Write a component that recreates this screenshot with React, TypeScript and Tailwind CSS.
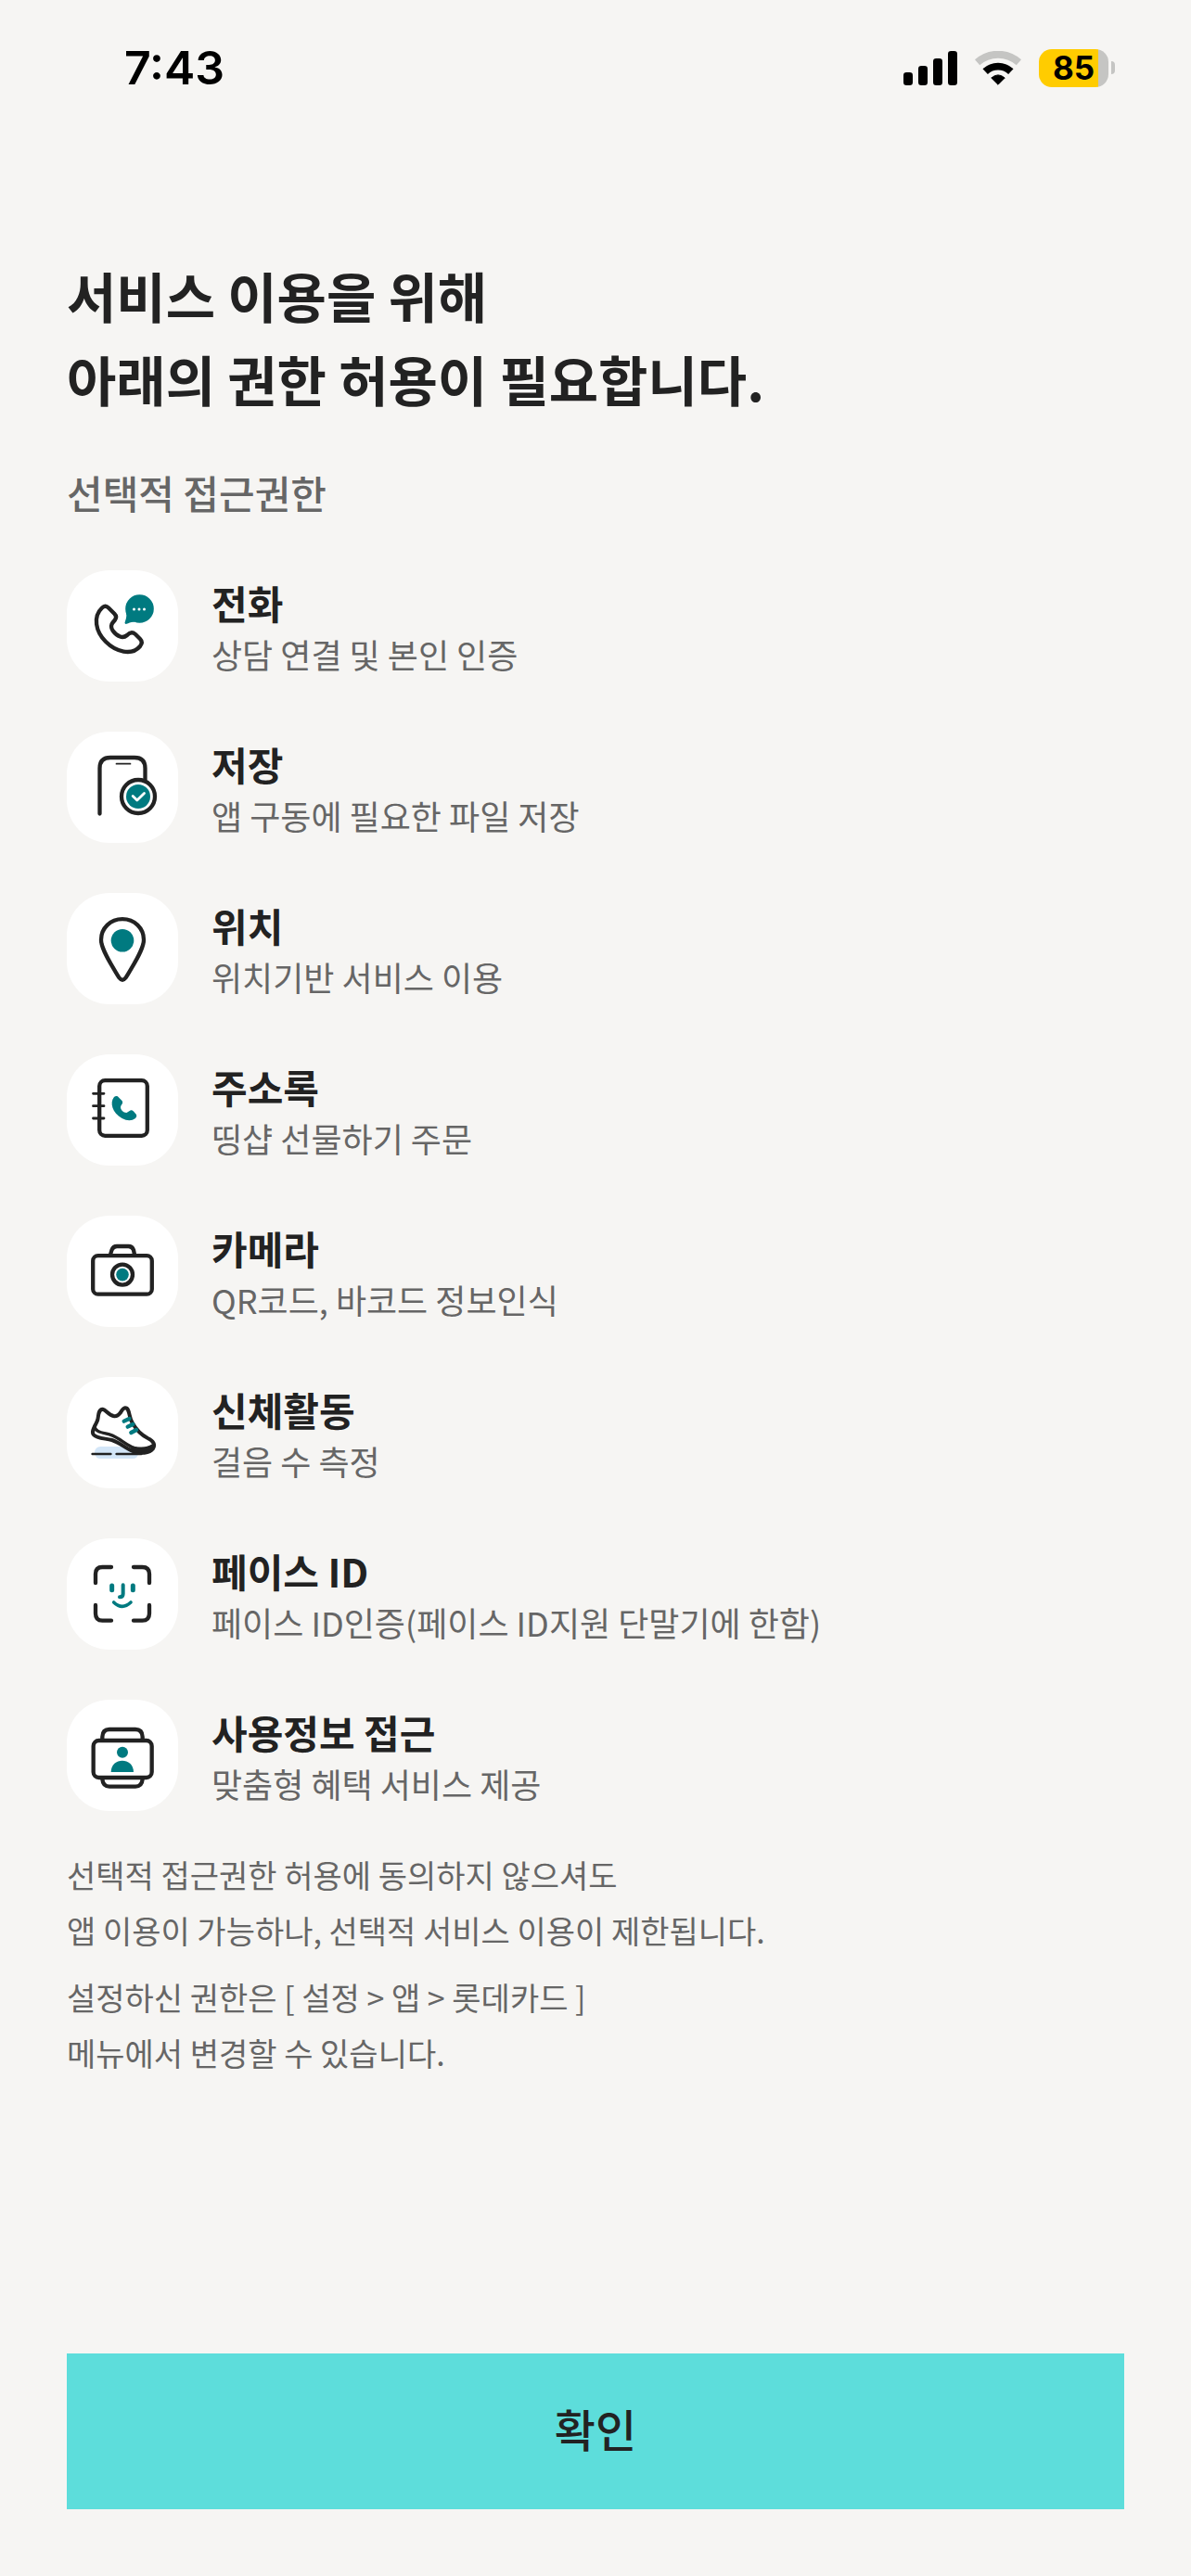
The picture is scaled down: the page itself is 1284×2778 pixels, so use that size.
import type { ReactNode } from "react";

const INK = "#222222";
const TEAL = "#007a80";

function Icon({ children }: { children: ReactNode }) {
  return (
    <svg
      viewBox="0 0 120 120"
      className="size-[120px] shrink-0 rounded-[46px] bg-white"
      fill="none"
      stroke={INK}
      strokeWidth="4.3"
      strokeLinecap="round"
      strokeLinejoin="round"
      aria-hidden="true"
    >
      {children}
    </svg>
  );
}

const PhoneIcon = () => (
  <Icon>
    <path d="M38 40.5Q41.5 37 45 40.5L51.5 47Q54.5 50 52 53.5L49.5 56.5Q46.500 60 49.500 65Q53 70 57.500 71.500Q61.500 73 65 70Q69.500 65 74 69L79 74Q82.500 77.500 79 82C70 92.500 53 88 42 77C31 66 28 50 38 40.5Z" />
    <circle cx="78.500" cy="41.500" r="15.300" fill={TEAL} stroke="none" />
    <path d="M64 46C65 50 63.500 53 62.500 56.500Q62.500 58.200 64.500 57.800C67 57 69 55.500 73 55.800L78 44Z" fill={TEAL} stroke="none" />
    <g fill="white" stroke="none">
      <circle cx="72.500" cy="42" r="1.500" />
      <circle cx="78" cy="42" r="1.500" />
      <circle cx="83.500" cy="42" r="1.500" />
    </g>
  </Icon>
);

const StorageIcon = () => (
  <Icon>
    <path d="M35.500 88.500V39.500Q35.500 28 47 28H73Q84.500 28 84.500 39.500V52" />
    <path d="M53.500 34.700H68.500" strokeWidth="1.700" />
    <circle cx="77" cy="70" r="18" fill="white" />
    <circle cx="77" cy="70" r="13" fill={TEAL} stroke="none" />
    <path d="M71.200 69.500L75.800 74L83.500 66.500" stroke="white" strokeWidth="2.800" />
  </Icon>
);

const LocationIcon = () => (
  <Icon>
    <path d="M60 28.200C47 28.200 37 38 37 50.500C37 61 49 79 56.500 91.500Q60 96 63.500 91.500C71 79 83 61 83 50.500C83 38 73 28.200 60 28.200Z" />
    <circle cx="60" cy="51.300" r="12.300" fill={TEAL} stroke="none" />
  </Icon>
);

const ContactsIcon = () => (
  <Icon>
    <rect x="35.200" y="28.200" width="51.600" height="59.600" rx="6" />
    <path d="M28.500 42.300H40M28.500 55.700H40M28.500 69H40" strokeWidth="2.800" />
    <path
      d="M51 46Q54 44 56 46.500L59.500 50Q61 52 59 54.500Q57 57 59 60Q61 63 64.500 63L68.500 60.500Q70 59.500 72 61.500L75 65Q76 67 74 69Q68 73.500 59.500 69C49 63 46 52 51 46Z"
      fill={TEAL}
      stroke="none"
    />
  </Icon>
);

const CameraIcon = () => (
  <Icon>
    <rect x="28.200" y="43.200" width="63.600" height="41.500" rx="5.500" />
    <path d="M47 42L48.500 37Q50 33 54 33H66.500Q70.500 33 72 37L73 42" />
    <circle cx="60" cy="63.600" r="11" />
    <circle cx="60" cy="63.600" r="6.800" fill={TEAL} stroke="none" />
  </Icon>
);

const ShoeIcon = () => (
  <Icon>
    <g transform="translate(12 10) scale(0.3333)" strokeWidth="12">
      <rect x="54" y="195" width="142" height="39" rx="19" fill="#d3e6f8" stroke="none" />
      <path
        d="M64 108C67 92 66 75 80 74C92 76 98 94 118 97C140 98 138 72 153 70C168 70 164 100 176 118C188 140 206 158 226 168C244 176 252 190 242 203C232 217 200 218 182 212C158 204 136 182 110 174C88 168 62 170 50 156C42 144 58 126 64 108Z"
        fill="white"
      />
      <path d="M54 128C54 150 84 150 106 157C134 166 156 191 182 199C204 205 226 202 243 191" strokeWidth="10" />
      <path d="M160 203C184 216 226 219 241 198L182 200Z" fill={INK} strokeWidth="4" />
      <path d="M47 219H106M125 219H205" strokeWidth="8" />
      <path d="M149 113L166 105M161 131L178 123M172 150L189 141" stroke={TEAL} strokeWidth="13" />
    </g>
  </Icon>
);

const FaceIcon = () => (
  <Icon>
    <g transform="translate(0 -1) scale(0.3333)" strokeWidth="13">
      <path d="M93 147V118Q93 96 115 96H144M216 96H244Q267 96 267 118V147M267 219V246Q267 269 244 269H216M144 269H115Q93 269 93 246V219" />
      <g stroke={TEAL}>
        <path d="M146 156V170M214 156V170" strokeWidth="15" />
        <path d="M182 154V182Q182 193 171 193" strokeWidth="12" />
        <path d="M152 210Q179 236 207 210" strokeWidth="11" />
      </g>
    </g>
  </Icon>
);

const UsageIcon = () => (
  <Icon>
    <g transform="translate(0 -175) scale(0.3333)" strokeWidth="13">
      <rect x="86" y="657" width="189" height="120" rx="18" />
      <path d="M115 652V645Q116 621 138 621H222Q244 621 245 645V652M115 782Q117 806 138 806H222Q243 806 245 782" />
      <g fill={TEAL} stroke="none">
        <circle cx="180" cy="695" r="18" />
        <path d="M143 759C143 710 216 710 216 759Z" />
      </g>
    </g>
  </Icon>
);

const permissions = [
  { icon: <PhoneIcon />, name: "전화", detail: "상담 연결 및 본인 인증" },
  { icon: <StorageIcon />, name: "저장", detail: "앱 구동에 필요한 파일 저장" },
  { icon: <LocationIcon />, name: "위치", detail: "위치기반 서비스 이용" },
  { icon: <ContactsIcon />, name: "주소록", detail: "띵샵 선물하기 주문" },
  { icon: <CameraIcon />, name: "카메라", detail: "QR코드, 바코드 정보인식" },
  { icon: <ShoeIcon />, name: "신체활동", detail: "걸음 수 측정" },
  { icon: <FaceIcon />, name: "페이스 ID", detail: "페이스 ID인증(페이스 ID지원 단말기에 한함)" },
  { icon: <UsageIcon />, name: "사용정보 접근", detail: "맞춤형 혜택 서비스 제공" },
];

function StatusBar() {
  return (
    <div className="flex h-[146px] items-center justify-between pr-[82px] pl-[134px] font-['Inter',sans-serif] text-black">
      <span className="text-[50px] font-semibold">7:43</span>
      <div className="flex items-center">
        <svg viewBox="0 0 58 37" className="mr-[19px] h-[37px] w-[58px]" aria-hidden="true">
          <rect x="0" y="23" width="10" height="14" rx="3.300" />
          <rect x="16" y="16" width="10" height="21" rx="3.300" />
          <rect x="32" y="8" width="10" height="29" rx="3.300" />
          <rect x="48" y="0" width="10" height="37" rx="3.300" />
        </svg>
        <svg viewBox="0 0 152 112" className="mr-[19px] h-[37px] w-[50px]" fill="none" aria-hidden="true">
          <path d="M8 37A102 102 0 0 1 144 37" stroke="#c5c5c3" strokeWidth="24" />
          <path d="M34 67A61 61 0 0 1 118 67" stroke="black" strokeWidth="24" />
          <path d="M76 110L54 88Q76 69 98 88Z" fill="black" stroke="black" strokeWidth="3" strokeLinejoin="round" />
        </svg>
        <div className="flex h-[41px] w-[75px] items-center justify-center rounded-[14px] bg-linear-to-r from-[#ffcc00] from-85% to-[#c5c5c3] to-85% text-[35px] leading-none font-bold">
          85
        </div>
        <div className="ml-[3px] h-[14px] w-[4px] rounded-r-full bg-[#c5c5c3]" />
      </div>
    </div>
  );
}

export default function App() {
  return (
    <div className="flex min-h-screen flex-col bg-[#f6f5f3] font-['Noto_Sans_CJK_KR',sans-serif] text-[#222222]">
      <StatusBar />
      <main className="flex flex-1 flex-col px-[72px] pt-[127px] pb-[72px]">
        <h1 className="text-[58px] leading-[90px] font-bold">
          서비스 이용을 위해
          <br />
          아래의 권한 허용이 필요합니다.
        </h1>
        <h2 className="mt-12 text-[42px] leading-[60px] font-medium text-[#666666]">선택적 접근권한</h2>
        <ul className="mt-[54px] flex flex-col gap-[54px]">
          {permissions.map((item) => (
            <li key={item.name} className="flex items-center gap-9">
              {item.icon}
              <div>
                <h3 className="text-[42px] leading-[60px] font-bold">{item.name}</h3>
                <p className="text-[36px] leading-[50px] text-[#666666]">{item.detail}</p>
              </div>
            </li>
          ))}
        </ul>
        <div className="mt-[39px] flex flex-col gap-3 text-[34px] leading-[60px] text-[#666666]">
          <p>
            선택적 접근권한 허용에 동의하지 않으셔도
            <br />
            앱 이용이 가능하나, 선택적 서비스 이용이 제한됩니다.
          </p>
          <p>
            설정하신 권한은 [ 설정 &gt; 앱 &gt; 롯데카드 ]
            <br />
            메뉴에서 변경할 수 있습니다.
          </p>
        </div>
        <button type="button" className="mt-auto h-[168px] w-full bg-[#5ddddb] pb-2 text-[48px] font-medium">
          확인
        </button>
      </main>
    </div>
  );
}
